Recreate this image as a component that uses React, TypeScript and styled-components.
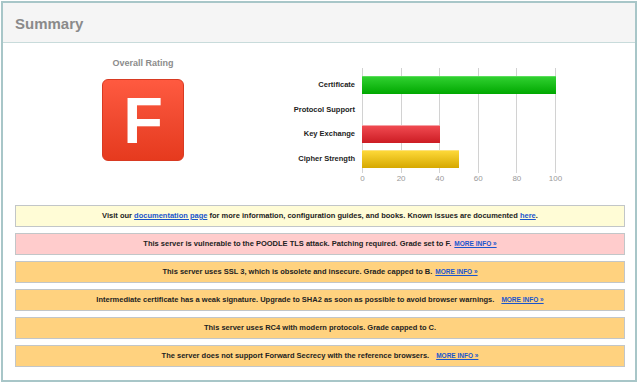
import React from "react";
import styled, { createGlobalStyle } from "styled-components";

type Score = { label: string; value: number; tone?: "good" | "bad" | "warn" };

const scores: Score[] = [
  { label: "Certificate", value: 100, tone: "good" },
  { label: "Protocol Support", value: 0 },
  { label: "Key Exchange", value: 40, tone: "bad" },
  { label: "Cipher Strength", value: 50, tone: "warn" },
];

const ticks = [0, 20, 40, 60, 80, 100];

const GlobalStyle = createGlobalStyle`
  html, body {
    margin: 0;
    background: #ffffff;
    font-family: "Liberation Sans", Arial, sans-serif;
  }
`;

const Frame = styled.div`
  box-sizing: border-box;
  margin: 1px;
  width: 636px;
  height: 381px;
  border: 2px solid #a8c6c8;
  background: #fff;
`;

const Header = styled.div`
  box-sizing: border-box;
  height: 40px;
  padding: 1px 0 0 12px;
  display: flex;
  align-items: center;
  background: #f5f5f5;
  border-bottom: 1px solid #c8dbdb;
  color: #8a8a8a;
  font-size: 15px;
  font-weight: bold;
`;

const Top = styled.div`
  display: flex;
`;

const RatingCol = styled.div`
  width: 280px;
  padding-top: 14px;
  display: flex;
  flex-direction: column;
  align-items: center;
`;

const RatingTitle = styled.div`
  color: #8c8c8c;
  font-size: 9px;
  font-weight: bold;
  line-height: 12px;
`;

const Grade = styled.div`
  box-sizing: border-box;
  margin-top: 10px;
  width: 82px;
  height: 82px;
  border-radius: 6px;
  border: 1px solid #d83a22;
  background: linear-gradient(#ff5a40, #f04a30 50%, #e63a1e);
  display: flex;
  align-items: center;
  justify-content: center;
  color: #fff;
  font-size: 65px;
  font-weight: bold;
  line-height: 1;
`;

const ChartCol = styled.div`
  margin-top: 25px;
  display: flex;
  flex-direction: column;
`;

const ChartBody = styled.div`
  display: flex;
  gap: 7px;
`;

const Labels = styled.div`
  width: 72px;
  padding: 8px 0 5px;
  display: flex;
  flex-direction: column;
  gap: 6.5px;
`;

const Label = styled.div`
  height: 18px;
  line-height: 18px;
  text-align: right;
  white-space: nowrap;
  color: #222;
  font-size: 7.5px;
  font-weight: bold;
`;

const Plot = styled.div`
  width: 194px;
  padding: 8px 0 5px;
  display: flex;
  flex-direction: column;
  gap: 6.5px;
  background: repeating-linear-gradient(
    to right,
    #d2d2d2 0 1px,
    transparent 1px 38.6px
  );
`;

const toneColors = {
  good: "border-top: 1px solid #5ade5a; background: linear-gradient(#30d030, #00a800);",
  bad: "border-top: 1px solid #f4a2a6; background: linear-gradient(#f04a50, #cc1c24);",
  warn: "border-top: 1px solid #fde27a; background: linear-gradient(#fdd838, #d6a800);",
};

const Track = styled.div`
  height: 18px;
`;

const Bar = styled.div<{ $tone: keyof typeof toneColors }>`
  box-sizing: border-box;
  height: 18px;
  ${(p) => toneColors[p.$tone]}
`;

const Ticks = styled.div`
  margin: 1px 0 0 79px;
  width: 194px;
  display: flex;
  justify-content: space-between;
`;

const Tick = styled.div`
  width: 1px;
  display: flex;
  justify-content: center;
  white-space: nowrap;
  color: #9a9a9a;
  font-size: 8px;
  line-height: 10px;
`;

const Notices = styled.div`
  margin-top: 21px;
  padding: 0 10px 0 12px;
  display: flex;
  flex-direction: column;
  gap: 6px;
`;

const noticeBg = {
  info: "#fffcd6",
  error: "#ffcccc",
  warning: "#ffd27f",
};

const Notice = styled.div<{ $kind: keyof typeof noticeBg }>`
  box-sizing: border-box;
  height: 22px;
  border: 1px solid #c2c6c8;
  background: ${(p) => noticeBg[p.$kind]};
  text-align: center;
  color: #222;
  font-size: 7.5px;
  font-weight: bold;
  line-height: 20px;
  white-space: nowrap;
`;

const Link = styled.a`
  color: #1a55cc;
  text-decoration: underline;
`;

const MoreInfo = styled(Link)<{ $wide?: boolean }>`
  margin-left: ${(p) => (p.$wide ? "7px" : "3px")};
  font-size: 6.5px;
  text-transform: uppercase;
`;

export default function App() {
  return (
    <>
      <GlobalStyle />
      <Frame>
        <Header>Summary</Header>
        <Top>
          <RatingCol>
            <RatingTitle>Overall Rating</RatingTitle>
            <Grade>F</Grade>
          </RatingCol>
          <ChartCol>
            <ChartBody>
              <Labels>
                {scores.map((s) => (
                  <Label key={s.label}>{s.label}</Label>
                ))}
              </Labels>
              <Plot>
                {scores.map((s) => (
                  <Track key={s.label}>
                    {s.tone && s.value > 0 && (
                      <Bar $tone={s.tone} style={{ width: `${s.value}%` }} />
                    )}
                  </Track>
                ))}
              </Plot>
            </ChartBody>
            <Ticks>
              {ticks.map((t) => (
                <Tick key={t}>{t}</Tick>
              ))}
            </Ticks>
          </ChartCol>
        </Top>
        <Notices>
          <Notice $kind="info">
            Visit our <Link href="#">documentation page</Link> for more
            information, configuration guides, and books. Known issues are
            documented <Link href="#">here</Link>.
          </Notice>
          <Notice $kind="error">
            This server is vulnerable to the POODLE TLS attack. Patching
            required. Grade set to F.
            <MoreInfo href="#">More info »</MoreInfo>
          </Notice>
          <Notice $kind="warning">
            This server uses SSL 3, which is obsolete and insecure. Grade capped
            to B.
            <MoreInfo href="#">More info »</MoreInfo>
          </Notice>
          <Notice $kind="warning">
            Intermediate certificate has a weak signature. Upgrade to SHA2 as
            soon as possible to avoid browser warnings.
            <MoreInfo href="#" $wide>
              More info »
            </MoreInfo>
          </Notice>
          <Notice $kind="warning">
            This server uses RC4 with modern protocols. Grade capped to C.
          </Notice>
          <Notice $kind="warning">
            The server does not support Forward Secrecy with the reference
            browsers.
            <MoreInfo href="#" $wide>
              More info »
            </MoreInfo>
          </Notice>
        </Notices>
      </Frame>
    </>
  );
}
